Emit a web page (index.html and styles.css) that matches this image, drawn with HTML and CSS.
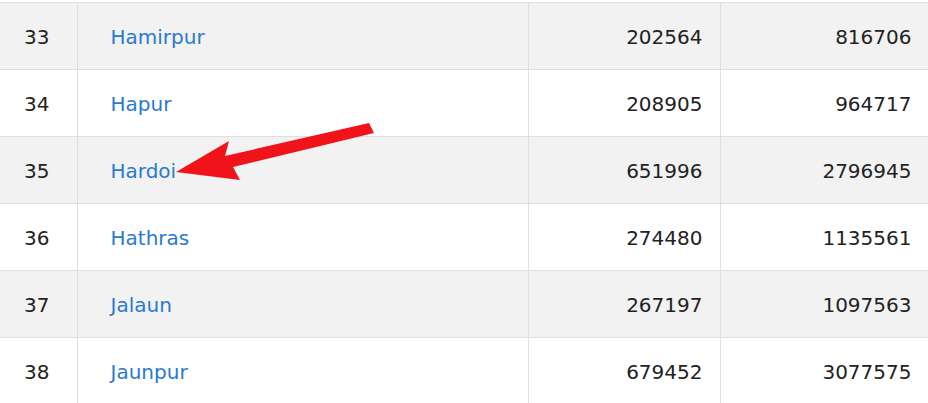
FILE: index.html
```html
<!DOCTYPE html>
<html>
<head>
<meta charset="utf-8">
<link rel="stylesheet" href="styles.css">
</head>
<body>
<div class="wrap">
<table class="tbl">
<colgroup><col class="c1"><col class="c2"><col class="c3"><col class="c4"></colgroup>
<tbody>
<tr class="odd"><td class="num">33</td><td class="name"><a href="#">Hamirpur</a></td><td class="val">202564</td><td class="val">816706</td></tr>
<tr><td class="num">34</td><td class="name"><a href="#">Hapur</a></td><td class="val">208905</td><td class="val">964717</td></tr>
<tr class="odd"><td class="num">35</td><td class="name"><a href="#">Hardoi</a></td><td class="val">651996</td><td class="val">2796945</td></tr>
<tr><td class="num">36</td><td class="name"><a href="#">Hathras</a></td><td class="val">274480</td><td class="val">1135561</td></tr>
<tr class="odd"><td class="num">37</td><td class="name"><a href="#">Jalaun</a></td><td class="val">267197</td><td class="val">1097563</td></tr>
<tr><td class="num">38</td><td class="name"><a href="#">Jaunpur</a></td><td class="val">679452</td><td class="val">3077575</td></tr>
</tbody>
</table>
<svg class="arrow" width="928" height="403" viewBox="0 0 928 403">
<polygon points="176,172 229,141 225,156 369,123 374,133 233,167 240,180" fill="#f0131a"/>
</svg>
</div>
</body>
</html>
```
FILE: styles.css
```css
html, body { margin: 0; padding: 0; background: #fff; }
.wrap { position: relative; padding-top: 2px; width: 928px; height: 401px; overflow: hidden; }
.tbl {
  border-collapse: collapse;
  width: 929px;
  table-layout: fixed;
  font-family: "DejaVu Sans", Verdana, sans-serif;
  font-size: 20px;
  color: #222;
}
.c1 { width: 77px; }
.c2 { width: 451px; }
.c3 { width: 192px; }
.c4 { width: 209px; }
.tbl td {
  border: 1px solid #dedede;
  height: 67px;
  padding: 2px 0 0 0;
  box-sizing: border-box;
  vertical-align: middle;
}
.tbl tr:first-child td { border-top-color: #e6e6e6; }
.tbl td:first-child { border-left: none; }
.tbl tr.odd td { background: #f2f2f2; }
.num { text-align: center; padding-right: 3px !important; }
.name { padding-left: 33px !important; }
.name a { color: #2a7acd; text-decoration: none; }
.val { text-align: right; padding-right: 17px !important; }
.arrow { position: absolute; left: 0; top: 0; }
```
